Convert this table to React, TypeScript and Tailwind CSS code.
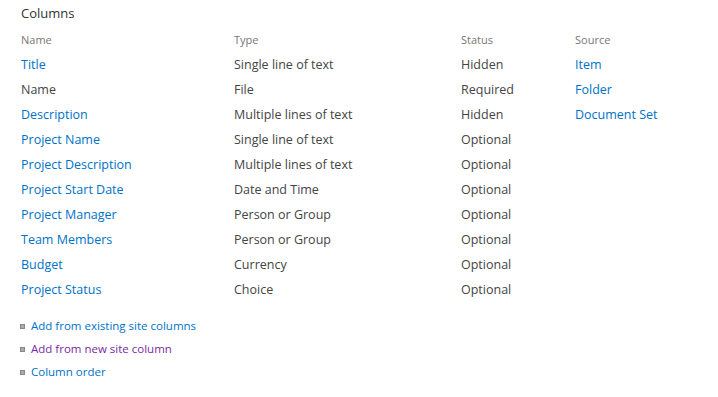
const rows = [
  { name: "Title", link: true, type: "Single line of text", status: "Hidden", source: "Item" },
  { name: "Name", link: false, type: "File", status: "Required", source: "Folder" },
  { name: "Description", link: true, type: "Multiple lines of text", status: "Hidden", source: "Document Set" },
  { name: "Project Name", link: true, type: "Single line of text", status: "Optional", source: "" },
  { name: "Project Description", link: true, type: "Multiple lines of text", status: "Optional", source: "" },
  { name: "Project Start Date", link: true, type: "Date and Time", status: "Optional", source: "" },
  { name: "Project Manager", link: true, type: "Person or Group", status: "Optional", source: "" },
  { name: "Team Members", link: true, type: "Person or Group", status: "Optional", source: "" },
  { name: "Budget", link: true, type: "Currency", status: "Optional", source: "" },
  { name: "Project Status", link: true, type: "Choice", status: "Optional", source: "" },
];

const actions = [
  { label: "Add from existing site columns", visited: false },
  { label: "Add from new site column", visited: true },
  { label: "Column order", visited: false },
];

export default function App() {
  return (
    <div className="w-[718px] h-[397px] bg-white pl-[21px] pt-[4px] text-[12.5px] text-[#444] font-['Open_Sans',sans-serif]">
      <div className="text-[13px] leading-[18px] text-[#333]">Columns</div>
      <table className="mt-[6px] border-collapse">
        <thead>
          <tr className="text-[11px] text-[#777] h-[25px]">
            <th className="w-[213px] p-0 text-left font-normal">Name</th>
            <th className="w-[227px] p-0 text-left font-normal">Type</th>
            <th className="w-[114px] p-0 text-left font-normal">Status</th>
            <th className="p-0 text-left font-normal">Source</th>
          </tr>
        </thead>
        <tbody>
          {rows.map((r) => (
            <tr key={r.name} className="h-[25px]">
              <td className={r.link ? "p-0 text-[#0072c6]" : "p-0"}>{r.name}</td>
              <td className="p-0">{r.type}</td>
              <td className="p-0">{r.status}</td>
              <td className="p-0 text-[#0072c6]">{r.source}</td>
            </tr>
          ))}
        </tbody>
      </table>
      <ul className="mt-[14px] -ml-[1px] flex flex-col gap-[5px] text-[11.5px]">
        {actions.map((a) => (
          <li key={a.label} className="flex items-center h-[18px]">
            <span className="w-[5px] h-[5px] bg-[#aaa] border border-[#888] mr-[6px]" />
            <span className={a.visited ? "text-[#7a29a3]" : "text-[#0072c6]"}>{a.label}</span>
          </li>
        ))}
      </ul>
    </div>
  );
}
